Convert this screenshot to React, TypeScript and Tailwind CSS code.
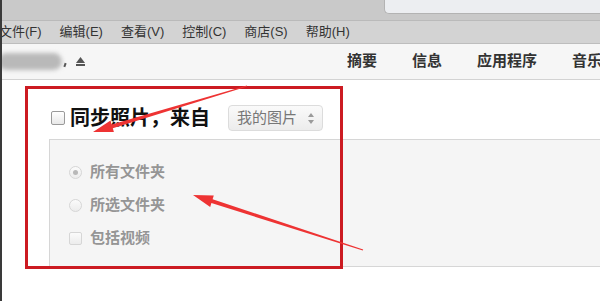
import React from "react";

const menus = ["文件(F)", "编辑(E)", "查看(V)", "控制(C)", "商店(S)", "帮助(H)"];
const tabs = ["摘要", "信息", "应用程序", "音乐"];

const Radio = ({ checked }: { checked?: boolean }) => (
  <span className="flex h-[13px] w-[13px] items-center justify-center rounded-full border border-[#d6d6d6] bg-gradient-to-b from-[#fbfbfb] to-[#ececec]">
    {checked && <span className="h-[5px] w-[5px] rounded-full bg-[#b8b8b8]" />}
  </span>
);

const App = () => {
  return (
    <div
      className="relative h-[301px] w-[600px] overflow-hidden border-l-2 border-[#3a3a3a] bg-white"
      style={{ fontFamily: '"Liberation Sans", "Noto Sans CJK SC", sans-serif' }}
    >
      {/* title strip */}
      <div className="flex h-[21px] border-b border-[#bababa] bg-[#c9c9c9]">
        <div className="ml-auto h-[14px] w-[216px] rounded-bl-[5px] border-b border-l border-[#b3b3b3] bg-[#eceef1]" />
      </div>

      {/* menu bar */}
      <div className="flex h-[23px] items-center gap-[18px] border-b border-[#bdbdbd] bg-[#d3d3d3] text-[13px] text-[#333]">
        {menus.map((m, i) => (
          <span key={i} className={i === 0 ? "-ml-[3px]" : ""}>
            {m}
          </span>
        ))}
      </div>

      {/* toolbar */}
      <div className="flex h-[36px] items-center border-b border-[#d3d3d3] bg-[#f6f6f6]">
        <div className="flex items-center">
          <span className="-ml-[4px] h-[17px] w-[64px] rounded-full bg-[#b9b9b9] blur-[2px]" />
          <span className="ml-[2px] mt-[6px] h-[4px] w-[2px] rotate-[20deg] bg-[#555]" />
          <span className="ml-[10px] flex flex-col items-center gap-[1px]">
            <svg width="9" height="6" viewBox="0 0 9 6">
              <polygon points="4.5,0 9,6 0,6" fill="#555" />
            </svg>
            <span className="h-[2px] w-[9px] bg-[#555]" />
          </span>
        </div>
        <div className="-mr-[2px] ml-auto flex gap-[35px] text-[15px] font-bold text-[#333]">
          {tabs.map((t) => (
            <span key={t}>{t}</span>
          ))}
        </div>
      </div>

      {/* content */}
      <div className="pl-[47px] pt-[25px]">
        <div className="flex h-[26px] items-center">
          <span className="ml-[2px] h-[14px] w-[14px] rounded-[2px] border border-[#9a9a9a] bg-gradient-to-b from-white to-[#e8e8e8]" />
          <span className="ml-[5px] text-[20px] font-bold leading-none text-[#111]">同步照片，来自</span>
          <span className="ml-[18px] flex h-[26px] w-[95px] items-center rounded-[4px] border border-[#dcdcdc] bg-gradient-to-b from-[#fafafa] to-[#ececec] pl-[8px] text-[15px] text-[#777]">
            我的图片
            <svg className="ml-[11px]" width="6" height="11" viewBox="0 0 6 11">
              <polygon points="3,0 6,4 0,4" fill="#9a9a9a" />
              <polygon points="0,7 6,7 3,11" fill="#9a9a9a" />
            </svg>
          </span>
        </div>

        <div className="mt-[8px] flex h-[128px] flex-col gap-[13px] border-y border-l border-[#d6d6d6] bg-[#f5f5f5] pl-[19px] pt-[22px] text-[15px] font-semibold text-[#959595]">
          <div className="flex h-[20px] items-center gap-[8px]">
            <Radio checked />
            <span>所有文件夹</span>
          </div>
          <div className="flex h-[20px] items-center gap-[8px]">
            <Radio />
            <span>所选文件夹</span>
          </div>
          <div className="flex h-[20px] items-center gap-[8px]">
            <span className="h-[13px] w-[13px] rounded-[2px] border border-[#d6d6d6] bg-gradient-to-b from-[#fbfbfb] to-[#ececec]" />
            <span>包括视频</span>
          </div>
        </div>
      </div>

      {/* annotation overlay */}
      <div className="absolute left-[23px] top-[86px] h-[183px] w-[318px] border-[3px] border-[#cc1b22]" />
      <svg className="pointer-events-none absolute left-[-2px] top-0" width="600" height="301" viewBox="0 0 600 301">
        <polygon
          points="93,132 113.9,132.1 112.8,128.2 247.1,86.5 246.9,85.5 111.6,124.4 110.5,120.5"
          fill="#ee3333"
        />
        <polygon
          points="193,195 210.2,206.9 211.4,203.1 362.8,250.5 363.2,249.5 212.6,199.3 213.8,195.5"
          fill="#ee3333"
        />
      </svg>
    </div>
  );
};

export default App;
